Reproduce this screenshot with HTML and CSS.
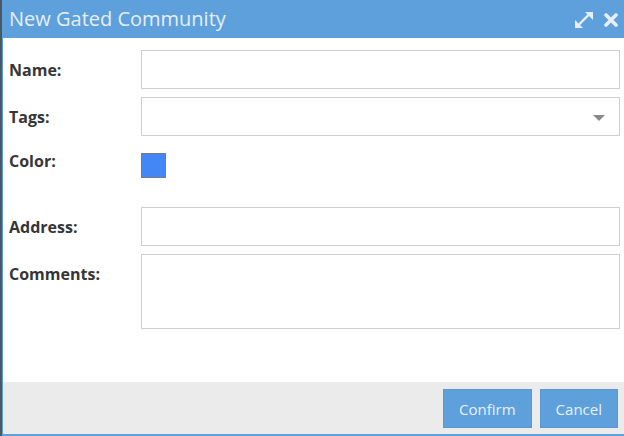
FILE: index.html
```html
<!DOCTYPE html>
<html>
<head>
<meta charset="utf-8">
<link rel="stylesheet" href="styles.css">
</head>
<body>
<div class="dialog">
  <div class="header">
    <span class="title">New Gated Community</span>
    <div class="tools">
      <svg class="icon-expand" width="20" height="18" viewBox="0 0 20 18">
        <line x1="5" y1="13.5" x2="14.5" y2="4" stroke="#e6eef7" stroke-width="2.4"/>
        <polygon points="11,1 19,1 19,9" fill="#e6eef7"/>
        <polygon points="1,9 1,17 9,17" fill="#e6eef7"/>
      </svg>
      <svg class="icon-close" width="14" height="14" viewBox="0 0 14 14">
        <path d="M2 2 L12 12 M12 2 L2 12" stroke="#e6eef7" stroke-width="3.6" stroke-linecap="round"/>
      </svg>
    </div>
  </div>
  <div class="content">
    <div class="row">
      <label class="label">Name:</label>
      <div class="field"></div>
    </div>
    <div class="row">
      <label class="label">Tags:</label>
      <div class="field select"><span class="caret"></span></div>
    </div>
    <div class="row row-color">
      <label class="label">Color:</label>
      <div><div class="swatch"></div></div>
    </div>
    <div class="row">
      <label class="label">Address:</label>
      <div class="field"></div>
    </div>
    <div class="row">
      <label class="label">Comments:</label>
      <div class="field area"></div>
    </div>
  </div>
  <div class="footer">
    <button class="btn">Confirm</button>
    <button class="btn">Cancel</button>
  </div>
</div>
</body>
</html>
```
FILE: styles.css
```css
html, body {
  margin: 0;
  padding: 0;
  height: 100%;
}
body {
  background: #4b5866;
  font-family: "Open Sans", "Liberation Sans", sans-serif;
  overflow: hidden;
}
.dialog {
  margin-left: 2px;
  height: 436px;
  box-sizing: border-box;
  border-left: 1px solid #5b9fdb;
  border-bottom: 2px solid #5b9fdb;
  background: #fff;
  display: flex;
  flex-direction: column;
}
.header {
  height: 38px;
  flex: none;
  background: #5da0dc;
  display: flex;
  align-items: center;
  justify-content: space-between;
  padding: 0 6px 0 6px;
}
.title {
  color: #e6eef7;
  font-size: 20px;
  line-height: 26px;
  margin-top: 0;
}
.tools {
  display: flex;
  align-items: center;
  gap: 10px;
}
.icon-expand { display: block; margin-top: 1px; }
.icon-close { display: block; margin-top: 1px; }
.content {
  flex: 1;
  padding: 12px 4px 0 6px;
  display: flex;
  flex-direction: column;
  gap: 8px;
}
.row {
  display: grid;
  grid-template-columns: 132px 1fr;
}
.label {
  font-weight: bold;
  font-size: 16px;
  line-height: 22px;
  color: #363636;
  padding-top: 9px;
}
.field {
  height: 39px;
  box-sizing: border-box;
  border: 1px solid #cfcfcf;
  background: #fff;
  position: relative;
}
.field.area {
  height: 75px;
}
.caret {
  position: absolute;
  right: 14px;
  top: 17px;
  width: 0;
  height: 0;
  border-left: 6px solid transparent;
  border-right: 6px solid transparent;
  border-top: 6px solid #8a8a8a;
}
.row-color {
  height: 55px;
}
.row-color .label {
  padding-top: 6px;
}
.swatch {
  width: 25px;
  height: 25px;
  box-sizing: border-box;
  margin-top: 9px;
  background: #4287f5;
  border: 1px solid #7a7a7a;
}
.footer {
  height: 52px;
  flex: none;
  background: #ebebeb;
  display: flex;
  justify-content: flex-end;
  align-items: center;
  gap: 8px;
  padding-right: 6px;
}
.btn {
  height: 39px;
  padding: 0 15px;
  border: 1px solid #5797d2;
  background: #5ea0dc;
  color: #e8f0f8;
  font-family: "Open Sans", "Liberation Sans", sans-serif;
  font-size: 15px;
  margin-top: 1px;
}
```
